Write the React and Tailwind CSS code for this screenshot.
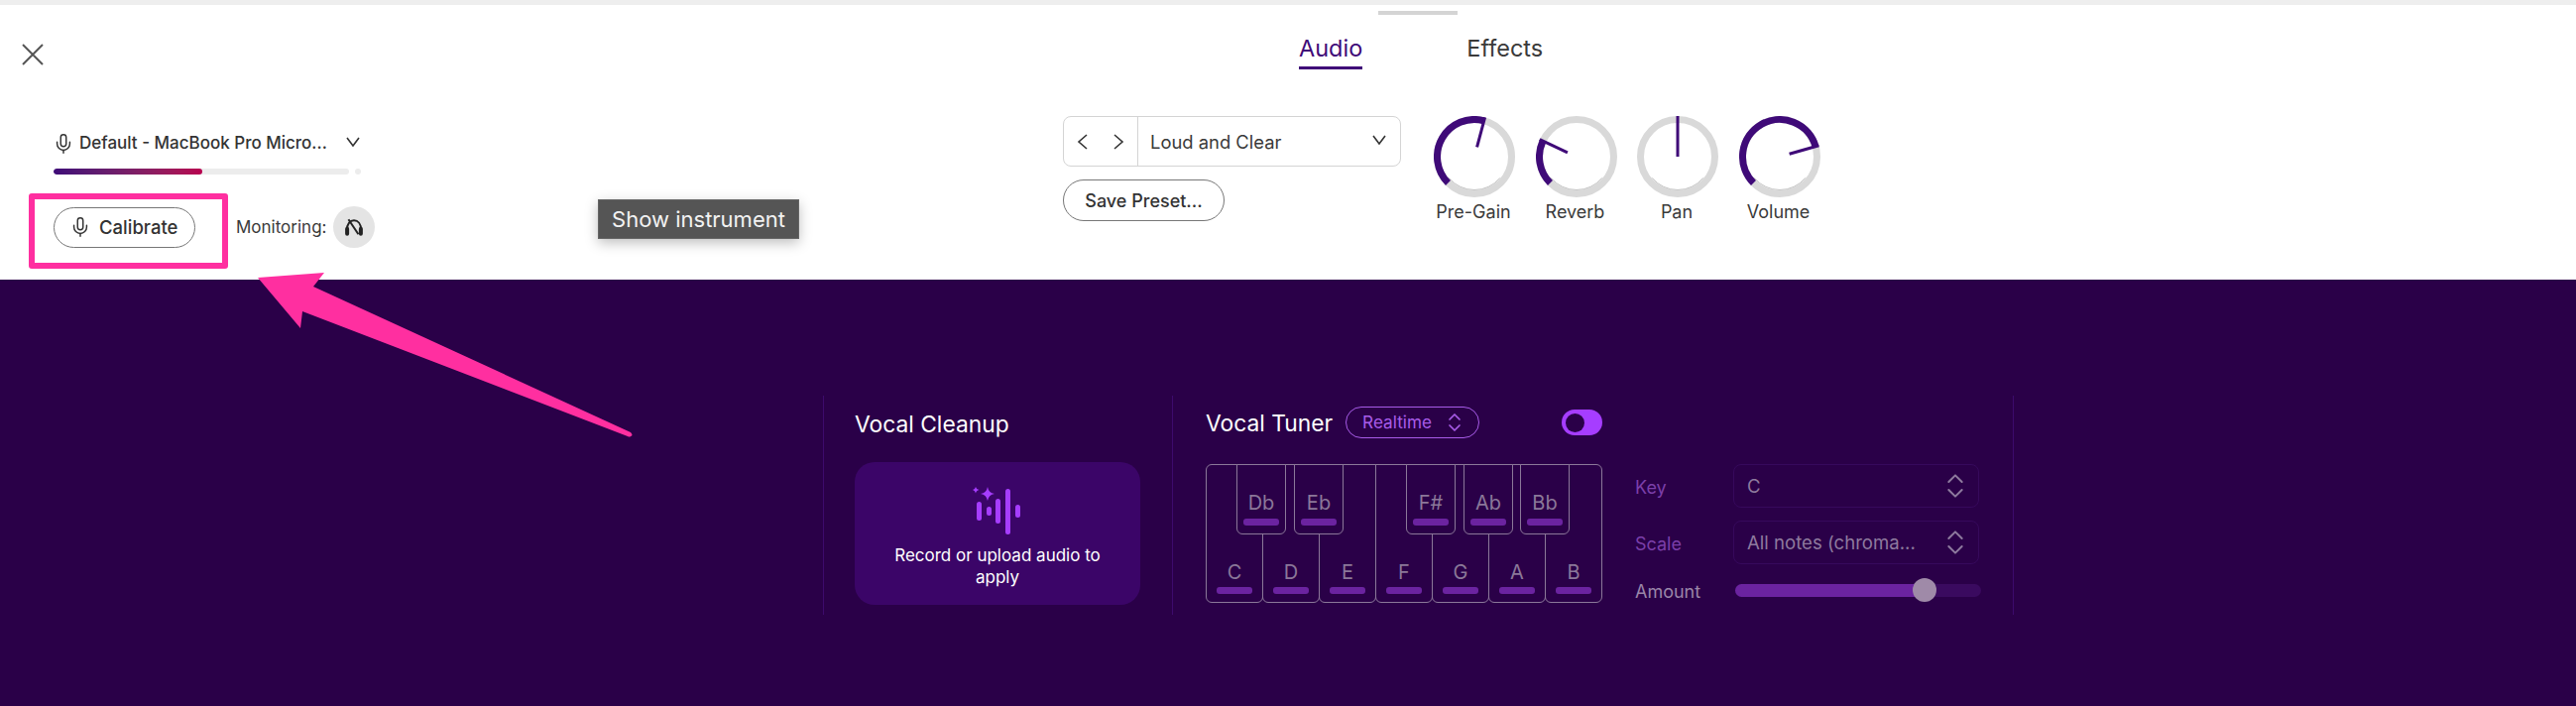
import { Mic, ChevronsUpDown } from 'lucide-react';

const font = { fontFamily: 'Inter, "Noto Sans", sans-serif' };

const polar = (r, deg) => {
  const a = ((deg - 90) * Math.PI) / 180;
  return [41 + r * Math.cos(a), 41 + r * Math.sin(a)];
};

const Knob = ({ label, angle }) => {
  const start = -135;
  const [sx, sy] = polar(37.5, start);
  const [ex, ey] = polar(37.5, angle);
  const [n1x, n1y] = polar(angle === 0 ? 0 : 10, angle);
  const [n2x, n2y] = polar(41, angle);
  const large = angle - start > 180 ? 1 : 0;
  const [bx, by] = polar(33.5, -130);
  const [cx, cy] = polar(33.5, 130);
  return (
    <div className="w-[82px] flex flex-col items-center">
      <svg width="82" height="82" viewBox="0 0 82 82">
        <circle cx="41" cy="41" r="37.5" fill="none" stroke="#d9d9d9" strokeWidth="7" />
        <path d={`M${cx} ${cy} A33.5 33.5 0 0 1 ${bx} ${by}`} fill="none" stroke="#c4c4c4" strokeWidth="1" />
        {angle !== 0 && (
          <path d={`M${sx} ${sy} A37.5 37.5 0 ${large} 1 ${ex} ${ey}`} fill="none" stroke="#3f0a78" strokeWidth="7" />
        )}
        <line x1={n1x} y1={n1y} x2={n2x} y2={n2y} stroke="#3f0a78" strokeWidth="3" />
      </svg>
      <span className="mt-[3px] -ml-[2px] text-[18px] leading-[24px] text-[#3a3a3a] whitespace-nowrap">{label}</span>
    </div>
  );
};

const Chev = ({ dir, className }) => {
  const paths = {
    down: 'M1 1 L7 9 L13 1',
    left: 'M10 1 L2 8 L10 15',
    right: 'M2 1 L10 8 L2 15',
  };
  const isDown = dir === 'down';
  return (
    <svg width={isDown ? 14 : 12} height={isDown ? 10 : 16} viewBox={isDown ? '0 0 14 10' : '0 0 12 16'} className={className}>
      <path d={paths[dir]} fill="none" stroke="#333" strokeWidth="1.6" />
    </svg>
  );
};

const whiteKeys = ['C', 'D', 'E', 'F', 'G', 'A', 'B'];
const blackKeys = [
  { label: 'Db', cls: 'left-[31px]' },
  { label: 'Eb', cls: 'left-[89px]' },
  { label: 'F#', cls: 'left-[202px]' },
  { label: 'Ab', cls: 'left-[260px]' },
  { label: 'Bb', cls: 'left-[317px]' },
];

const Piano = () => (
  <div className="relative w-[400px] h-[140px]">
    <div className="flex h-full">
      {whiteKeys.map((k, i) => (
        <div
          key={k}
          className={`flex-1 border border-[#8b7899] rounded-b-md flex flex-col items-center justify-end pb-[8px] ${i > 0 ? '-ml-px' : 'rounded-tl-md'} ${i === 6 ? 'rounded-tr-md' : ''}`}
        >
          <span className="text-[20px] leading-[28px] text-[#8b7899]">{k}</span>
          <div className="mt-[1px] w-[36px] h-[7px] rounded-[3px] bg-[#6b23a0]" />
        </div>
      ))}
    </div>
    {blackKeys.map((k) => (
      <div
        key={k.label}
        className={`absolute top-0 ${k.cls} w-[50px] h-[71px] bg-[#2a0048] border border-[#8b7899] rounded-b-md flex flex-col items-center justify-end pb-[8px]`}
      >
        <span className="text-[20px] leading-[28px] text-[#8b7899]">{k.label}</span>
        <div className="mt-[2px] w-[36px] h-[7px] rounded-[3px] bg-[#6b23a0]" />
      </div>
    ))}
  </div>
);

const SelectRow = ({ label, value, mt }) => (
  <div className={`flex items-center ${mt}`}>
    <span className="w-[99px] pt-[3px] text-[18px] text-[#7b3fa9]">{label}</span>
    <div className="w-[248px] h-[44px] border border-[#36095c] rounded-lg flex items-center justify-between pl-[13px] pr-[7px]">
      <span className="pt-[2px] text-[18.6px] text-[#8e7a9e] whitespace-nowrap">{value}</span>
      <ChevronsUpDown size={32} strokeWidth={1.5} className="text-[#8e7a9e]" />
    </div>
  </div>
);

const Annotation = () => (
  <>
    <div className="absolute left-[29px] top-[195px] w-[201px] h-[76px] border-[6px] border-[#ff2fa0] rounded-[3px]" />
    <svg className="absolute left-0 top-0" width="700" height="460" viewBox="0 0 700 460">
      <path
        d="M260 280 L327 275 L316 289 L636 436 Q639 439 636 440 Q635 441 633 440 L305 314 L303 331 Z"
        fill="#ff2fa0"
      />
    </svg>
  </>
);

export default function App() {
  return (
    <div className="relative w-[2598px] h-[712px] overflow-hidden bg-white" style={font}>
      <header className="h-[282px] bg-white">
        <div className="h-[5px] bg-[#eeeeee]" />
        <div className="ml-[1390px] mt-[6px] w-[80px] h-[4px] bg-[#d4d4d4]" />

        <div className="flex pl-[21px] mt-[18px]">
          <svg width="24" height="24" viewBox="0 0 24 24" className="mt-[10px]">
            <path d="M2 2 L22 22 M22 2 L2 22" stroke="#555" strokeWidth="2" fill="none" />
          </svg>
          <div className="flex ml-[1265px] gap-[105px] text-[23.5px] leading-[32px]">
            <span className="pb-[2px] border-b-[3px] border-[#3f0a78] text-[#3f0a78]">Audio</span>
            <span className="text-[#3a3a3a]">Effects</span>
          </div>
        </div>

        <div className="flex mt-[47px] pl-[54px]">
          <div className="w-[1018px] pt-[18px]">
            <div className="flex items-center h-[19px]">
              <Mic size={22} strokeWidth={1.6} className="text-[#333] -ml-[1px]" />
              <span className="ml-[5px] w-[269px] text-[17px] font-medium text-[#333] whitespace-nowrap">Default - MacBook Pro Micro...</span>
              <Chev dir="down" className="-mt-[3px]" />
            </div>
            <div className="flex items-center mt-[16px]">
              <div className="w-[298px] h-[6px] rounded-full bg-[#ececec] overflow-hidden">
                <div className="w-[150px] h-full rounded-full bg-gradient-to-r from-[#3f0a78] to-[#b8004f]" />
              </div>
              <div className="ml-[6px] w-[6px] h-[6px] rounded-full bg-[#ececec]" />
            </div>
            <div className="flex items-center mt-[32px]">
              <button className="w-[143px] h-[41px] rounded-full border border-[#777] flex items-center pl-[15px] bg-white">
                <Mic size={22} strokeWidth={1.6} className="text-[#333]" />
                <span className="ml-[8px] pt-[1px] text-[18.5px] font-medium text-[#333]">Calibrate</span>
              </button>
              <span className="ml-[41px] pt-[2px] text-[17px] text-[#3a3a3a]">Monitoring:</span>
              <div className="ml-[7px] w-[42px] h-[42px] rounded-full bg-[#e4e4e4] flex items-center justify-center">
                <svg width="20" height="18" viewBox="0 0 18 16">
                  <path d="M2.5 11 C2.5 5 5.5 2 9 2 C12.5 2 15.5 5 15.5 11" fill="none" stroke="#222" strokeWidth="1.8" />
                  <path d="M2.8 9.5 L2.8 14 M15.2 9.5 L15.2 14" stroke="#222" strokeWidth="3.6" strokeLinecap="round" />
                  <path d="M4 1 L13 14.5" stroke="#222" strokeWidth="1.8" />
                </svg>
              </div>
            </div>
          </div>

          <div className="w-[341px]">
            <div className="h-[51px] border border-[#d4d4d4] rounded-lg flex items-center">
              <div className="w-[75px] h-full border-r border-[#d4d4d4] flex items-center justify-between px-[13px]">
                <Chev dir="left" />
                <Chev dir="right" />
              </div>
              <span className="ml-[12px] pt-[2px] flex-1 text-[18.4px] text-[#3a3a3a]">Loud and Clear</span>
              <Chev dir="down" className="mr-[14px] -mt-[3px]" />
            </div>
            <button className="mt-[13px] w-[163px] h-[42px] rounded-full border border-[#777] text-[18px] font-medium text-[#333]">Save Preset...</button>
          </div>

          <div className="flex ml-[33px] gap-[20.5px]">
            <Knob label="Pre-Gain" angle={15} />
            <Knob label="Reverb" angle={-65} />
            <Knob label="Pan" angle={0} />
            <Knob label="Volume" angle={74} />
          </div>
        </div>
      </header>

      <main className="h-[430px] bg-[#2a0048] pt-[117px] pl-[830px]">
        <div className="flex h-[221px] w-[1201px] border-x border-[#3d0a6c]">
          <section className="w-[352px] pl-[31px] border-r border-[#3d0a6c]">
            <h2 className="mt-[12px] pt-[1px] h-[32px] text-[22.8px] leading-[32px] text-white">Vocal Cleanup</h2>
            <div className="mt-[23px] w-[288px] h-[144px] rounded-[20px] bg-[#3b0568] flex flex-col items-center pt-[25px]">
              <svg width="50" height="48" viewBox="0 0 50 48">
                <g fill="#a63dff">
                  <rect x="4" y="15" width="5" height="19" rx="2.5" />
                  <rect x="14" y="20" width="5" height="9" rx="2.5" />
                  <rect x="23" y="12" width="5" height="25" rx="2.5" />
                  <rect x="33" y="2" width="5" height="46" rx="2.5" />
                  <rect x="43" y="18" width="5" height="13" rx="2.5" />
                  <path d="M15 0 Q16 6 22 7 Q16 8 15 14 Q14 8 8 7 Q14 6 15 0 Z" />
                  <path d="M3 0 Q3.5 2.5 6.5 3 Q3.5 3.5 3 6.5 Q2.5 3.5 0 3 Q2.5 2.5 3 0 Z" />
                </g>
              </svg>
              <p className="mt-[10px] w-[240px] text-center text-[17px] leading-[22px] text-white">Record or upload audio to apply</p>
            </div>
          </section>

          <section className="flex-1 pl-[33px]">
            <div className="flex items-center mt-[11px] h-[32px] w-[400px]">
              <h2 className="pt-[2px] text-[22.8px] leading-[32px] text-white">Vocal Tuner</h2>
              <div className="ml-[13px] w-[135px] h-[32px] rounded-full border border-[#a85ce8] flex items-center pl-[16px] text-[17.2px] text-[#a85ce8]">
                <span className="w-[81px]">Realtime</span>
                <ChevronsUpDown size={24} strokeWidth={1.7} />
              </div>
              <div className="ml-auto w-[41px] h-[26px] rounded-full bg-[#a63dff] flex items-center pl-[4px]">
                <div className="w-[19px] h-[19px] rounded-full bg-[#2a0048]" />
              </div>
            </div>
            <div className="flex mt-[26px]">
              <Piano />
              <div className="ml-[33px]">
                <SelectRow label="Key" value="C" />
                <SelectRow label="Scale" value="All notes (chroma..." mt="mt-[13px]" />
                <div className="flex items-center mt-[14px] h-[24px]">
                  <span className="w-[101px] pt-[3px] text-[18px] text-[#9a86a8]">Amount</span>
                  <div className="relative w-[248px] h-[13px] rounded-full bg-[#3a0a5f]">
                    <div className="w-[190px] h-full rounded-full bg-[#6b23a0]" />
                    <div className="absolute left-[179px] -top-[6px] w-[24px] h-[24px] rounded-full bg-[#9f8aa8]" />
                  </div>
                </div>
              </div>
            </div>
          </section>
        </div>
      </main>

      <Annotation />

      <div className="absolute left-[603px] top-[201px] w-[203px] h-[40px] bg-[#555] border border-[#666] shadow-[0_4px_12px_rgba(0,0,0,0.25)] flex items-center justify-center text-[22px] text-[#f2f2f2] whitespace-nowrap">
        Show instrument
      </div>
    </div>
  );
}
